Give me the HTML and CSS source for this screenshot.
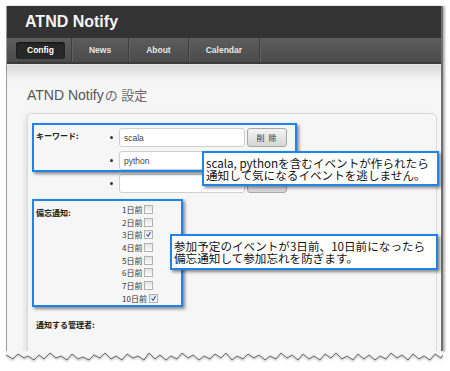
FILE: index.html
```html
<!DOCTYPE html>
<html>
  <head>
    <meta name="viewport" content="width=device-width, initial-scale=1" />
    <title>ATND Notify</title>
    <link rel="stylesheet" href="styles.css">
  </head>

  <body>
    <div class="shot">
      <div class="sheet">
        <div class="brand">ATND Notify</div>

        <ul class="nav">
          <li><a class="active">Config</a></li>
          <li><a>News</a></li>
          <li><a>About</a></li>
          <li><a>Calendar</a></li>
        </ul>

        <div class="content">
          <h1 class="title">ATND Notify<span>の 設定</span></h1>

          <div class="panel">
            <div class="field">
              <label class="field-label">キーワード:</label>
              <ul class="words">
                <li><input type="text" value="scala" /><button>削 除</button></li>
                <li><input type="text" value="python" /><button></button></li>
                <li><input type="text" value="" /><button></button></li>
              </ul>
            </div>

            <div class="field remind">
              <label class="field-label">備忘通知:</label>
              <ul class="days">
                <li>1日前<span class="cb"></span></li>
                <li>2日前<span class="cb"></span></li>
                <li>3日前<span class="cb on"><svg viewBox="0 0 9 9"><polyline points="2,4.5 4,7 7,1.5" /></svg></span></li>
                <li>4日前<span class="cb"></span></li>
                <li>5日前<span class="cb"></span></li>
                <li>6日前<span class="cb"></span></li>
                <li>7日前<span class="cb"></span></li>
                <li>10日前<span class="cb on"><svg viewBox="0 0 9 9"><polyline points="2,4.5 4,7 7,1.5" /></svg></span></li>
              </ul>
            </div>

            <div class="field admin">
              <label class="field-label">通知する管理者:</label>
            </div>
          </div>
        </div>
      </div>

      <!-- torn bottom edge of the screenshot -->
      <svg class="torn" viewBox="0 0 437 14" width="437" height="14">
        <path class="torn-fill" d="M0,0 L0,4 L7,8 L12,3 L18,7 L22,5 L28,9 L33,4 L38,8 L44,2 L50,7 L55,5 L61,9 L66,3 L72,8 L77,6 L83,9 L88,4 L94,7 L99,2 L105,8 L110,5 L116,9 L121,3 L127,7 L132,5 L138,9 L143,2 L149,8 L154,4 L160,9 L165,5 L171,8 L176,2 L182,7 L187,4 L193,9 L198,5 L204,8 L209,3 L215,7 L220,2 L226,9 L231,5 L237,8 L242,3 L248,7 L253,4 L259,9 L264,5 L270,8 L275,2 L281,7 L286,4 L292,9 L297,3 L303,8 L308,5 L314,9 L319,3 L325,7 L330,2 L336,8 L341,5 L347,9 L352,3 L358,8 L363,4 L369,9 L374,5 L380,8 L385,2 L391,7 L396,4 L402,9 L407,3 L413,8 L418,5 L424,9 L429,3 L435,7 L437,4 L437,0 Z" />
        <polyline class="torn-line" points="0,4 7,8 12,3 18,7 22,5 28,9 33,4 38,8 44,2 50,7 55,5 61,9 66,3 72,8 77,6 83,9 88,4 94,7 99,2 105,8 110,5 116,9 121,3 127,7 132,5 138,9 143,2 149,8 154,4 160,9 165,5 171,8 176,2 182,7 187,4 193,9 198,5 204,8 209,3 215,7 220,2 226,9 231,5 237,8 242,3 248,7 253,4 259,9 264,5 270,8 275,2 281,7 286,4 292,9 297,3 303,8 308,5 314,9 319,3 325,7 330,2 336,8 341,5 347,9 352,3 358,8 363,4 369,9 374,5 380,8 385,2 391,7 396,4 402,9 407,3 413,8 418,5 424,9 429,3 435,7 437,4" />
      </svg>
    </div>

    <!-- blue annotation marks drawn over the screenshot -->
    <div class="mark mark-words"></div>
    <div class="mark mark-days"></div>

    <div class="note note-words">
      <p>scala, pythonを含むイベントが作られたら</p>
      <p>通知して気になるイベントを逃しません。</p>
    </div>

    <div class="note note-days">
      <p>参加予定のイベントが3日前、10日前になったら</p>
      <p>備忘通知して参加忘れを防ぎます。</p>
    </div>
  </body>
</html>
```

FILE: styles.css
```css
body {
  margin: 0;
  background-color: #ffffff;
  font-family: "Liberation Sans", "Noto Sans CJK JP", sans-serif;
  position: relative;
  width: 450px;
  height: 371px;
  overflow: hidden;
}

.shot {
  margin: 6px 0 0 6px;
  width: 437px;
}

.sheet {
  border-left: 1px solid #9a9a9a;
  border-right: 2px solid #6f6f6f;
  box-shadow: 2px 0 2px rgba(0, 0, 0, 0.3);
  background-color: #f6f6f6;
}

.brand {
  height: 32px;
  line-height: 32px;
  padding-left: 18px;
  background-color: #333333;
  color: #f4f4f4;
  font-size: 16px;
  font-weight: bold;
}

.nav {
  display: flex;
  margin: 0;
  padding: 0 0 0 3px;
  list-style: none;
  height: 24px;
  background: linear-gradient(#5d5d5d, #4a4a4a);
  border-bottom: 2px solid #3a3a3a;
}

.nav li {
  display: flex;
  align-items: center;
  padding: 0 6px;
  border-right: 1px solid #3d3d3d;
  box-shadow: 1px 0 0 #616161;
}

.nav a {
  display: block;
  height: 17px;
  line-height: 17px;
  padding: 0 11px;
  border-radius: 3px;
  color: #e6e6e6;
  font-size: 8.5px;
  font-weight: bold;
}

.nav a.active {
  background-color: #272727;
  color: #ffffff;
  box-shadow: inset 0 1px 2px rgba(0, 0, 0, 0.6);
}

.content {
  height: 288px;
  overflow: hidden;
  padding-left: 20px;
  background: linear-gradient(#e9e9e9 0, #d9d9d9 2px, #f3f3f3 14px, #f6f6f6 20px);
}

.title {
  margin: 0;
  padding-top: 23px;
  height: 17px;
  line-height: 17px;
  font-size: 14px;
  font-weight: normal;
  color: #555555;
}

.title span {
  color: #6a6a6a;
  font-size: 13px;
  margin-left: 1px;
}

.panel {
  margin-top: 9px;
  width: 410px;
  height: 260px;
  box-sizing: border-box;
  border: 1px solid #dadada;
  border-radius: 5px;
  padding: 14px 0 0 8px;
  box-shadow: -4px 0 6px -3px rgba(0, 0, 0, 0.12);
}

.field {
  display: flex;
}

.field-label {
  width: 74px;
  flex-shrink: 0;
  margin-top: 3px;
  line-height: 10px;
  height: 10px;
  font-family: "Noto Sans CJK JP", sans-serif;
  font-size: 8px;
  font-weight: bold;
  color: #222222;
}

.words {
  margin: 0;
  padding: 0;
  list-style: none;
}

.words li {
  display: flex;
  align-items: center;
  height: 19px;
  margin-bottom: 4px;
}

.words li:last-child {
  margin-bottom: 0;
}

.words li::before {
  content: "";
  width: 3px;
  height: 3px;
  border-radius: 50%;
  background-color: #333333;
  margin-right: 6px;
}

.words input {
  width: 126px;
  height: 19px;
  box-sizing: border-box;
  margin: 0;
  padding: 0 4px;
  border: 1px solid #cfcfcf;
  border-radius: 3px;
  background-color: #ffffff;
  font-family: "Liberation Sans", sans-serif;
  font-size: 8.5px;
  color: #444444;
}

.words button {
  width: 40px;
  height: 19px;
  margin: 0 0 0 2px;
  padding: 0;
  border: 1px solid #a9a9a9;
  border-radius: 3px;
  background: linear-gradient(#f4f4f4, #d6d6d6);
  font-family: "Noto Sans CJK JP", sans-serif;
  font-size: 8px;
  letter-spacing: 1px;
  color: #333333;
}

.remind {
  margin-top: 10px;
}

.remind .field-label {
  margin-top: 5px;
}

.days {
  margin: 0;
  padding: 0 0 0 12px;
  list-style: none;
}

.days li {
  display: flex;
  align-items: center;
  height: 12.7px;
  font-family: "Noto Sans CJK JP", sans-serif;
  font-size: 8px;
  color: #333333;
}

.cb {
  display: inline-block;
  width: 9px;
  height: 9px;
  box-sizing: border-box;
  margin-left: 2px;
  border: 1px solid #b2b2b2;
  background: linear-gradient(#e4e4e4, #fbfbfb);
}

.cb svg {
  display: block;
  width: 7px;
  height: 7px;
}

.cb polyline {
  fill: none;
  stroke: #2a3f9e;
  stroke-width: 1.3;
}

.admin {
  margin-top: 12px;
}

.torn {
  display: block;
  margin-top: -1px;
}

.torn-fill {
  fill: #f6f6f6;
}

.torn-line {
  fill: none;
  stroke: #666666;
  stroke-width: 1;
  filter: drop-shadow(0 1px 1px rgba(0, 0, 0, 0.45));
}

.mark {
  position: absolute;
  box-sizing: border-box;
  border: 2px solid #1e84ea;
  box-shadow: 2px 2px 3px rgba(0, 0, 0, 0.45);
}

.mark-words {
  left: 32px;
  top: 123px;
  width: 265px;
  height: 49px;
}

.mark-days {
  left: 32px;
  top: 199px;
  width: 151px;
  height: 108px;
}

.note {
  position: absolute;
  box-sizing: border-box;
  display: flex;
  flex-direction: column;
  justify-content: center;
  padding: 0 2px;
  border: 2px solid #1e84ea;
  background-color: #ffffff;
  box-shadow: 2px 2px 3px rgba(0, 0, 0, 0.45);
  font-family: "Noto Sans CJK JP", sans-serif;
  font-size: 11.6px;
  line-height: 12px;
  color: #111111;
}

.note p {
  margin: 0;
  white-space: nowrap;
}

.note-words {
  left: 202px;
  top: 151px;
  width: 237px;
  height: 35px;
}

.note-days {
  left: 170px;
  top: 234px;
  width: 268px;
  height: 36px;
}
```
